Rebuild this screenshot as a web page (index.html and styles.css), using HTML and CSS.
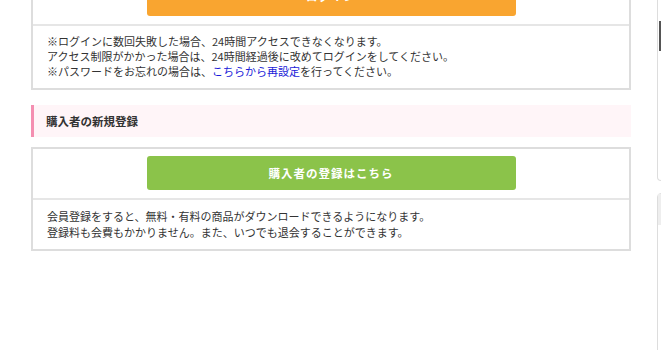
FILE: index.html
```html
<!DOCTYPE html>
<html lang="ja">
<head>
    <meta charset="UTF-8">
    <meta name="viewport" content="width=device-width, initial-scale=1.0">
    <title>ログイン</title>
    <link rel="stylesheet" href="styles.css">
</head>
<body>

<div class="page">
    <main class="main">
        <!-- ログイン -->
        <div class="box">
            <div class="box-action">
                <button class="btn btn-login">ログイン</button>
            </div>
            <div class="box-note box-note-tight">
                <p>※ログインに数回失敗した場合、24時間アクセスできなくなります。</p>
                <p>アクセス制限がかかった場合は、24時間経過後に改めてログインをしてください。</p>
                <p>※パスワードをお忘れの場合は、<a href="#">こちらから再設定</a>を行ってください。</p>
            </div>
        </div>

        <!-- 新規登録 -->
        <h2 class="section-title">購入者の新規登録</h2>
        <div class="box">
            <div class="box-action">
                <button class="btn btn-register">購入者の登録はこちら</button>
            </div>
            <div class="box-note">
                <p>会員登録をすると、無料・有料の商品がダウンロードできるようになります。</p>
                <p>登録料も会費もかかりません。また、いつでも退会することができます。</p>
            </div>
        </div>
    </main>

    <aside class="sidebar">
        <div class="widget widget-top">
            <div class="widget-bar"></div>
        </div>
        <div class="widget widget-bottom">
            <div class="widget-head"></div>
        </div>
    </aside>
</div>

</body>
</html>
```

FILE: styles.css
```css
:root {
    --borderColor: #dddddd;
    --textColor: #333333;
    --orange: #f9a530;
    --green: #8bc34a;
}

html, body {
    margin: 0;
    padding: 0;
    overflow: hidden;
}

body {
    font-family: "Noto Sans CJK JP", "Noto Sans", sans-serif;
    font-size: 11px;
    color: var(--textColor);
    background: #fff;
}

.page {
    display: flex;
    align-items: flex-start;
    margin-top: -27px; /* ページ途中から */
}

.main {
    width: 600px;
    margin-left: 31px;
    flex-shrink: 0;
}

/* Box */
.box {
    border: 2px solid var(--borderColor);
}

.box-action {
    display: flex;
    justify-content: center;
    padding: 7px 0 8px;
    border-bottom: 2px solid #e6e6e6;
}

.btn {
    width: 369px;
    height: 34px;
    border: none;
    border-radius: 3px;
    color: #fff;
    font-family: inherit;
    font-size: 11.5px;
    font-weight: bold;
    letter-spacing: 1px;
}

.btn-login {
    background: var(--orange);
    padding-bottom: 8px;
}

.btn-register {
    background: var(--green);
}

.box-note {
    padding: 8px 14px 9px;
    line-height: 16px;
}

.box-note-tight {
    line-height: 15px;
}

.box-note p {
    margin: 0;
}

.box-note a {
    color: #1a1ad8;
    text-decoration: none;
}

/* Section title */
.section-title {
    margin: 15px 0 10px;
    padding: 0 12px;
    height: 32px;
    line-height: 32px;
    font-size: 11.5px;
    font-weight: bold;
    background: #fff5f8;
    border-left: 3px solid #f48fb1;
}

/* Sidebar (rechts afgesneden) */
.sidebar {
    margin-left: 26px;
    width: 200px;
    flex-shrink: 0;
    display: flex;
    flex-direction: column;
    gap: 12px;
}

.widget {
    border: 1px solid var(--borderColor);
}

.widget-top {
    height: 208px;
    border-top: none;
    border-radius: 0 0 0 4px;
    padding-top: 48px;
    box-sizing: border-box;
}

.widget-bar {
    height: 30px;
    margin-left: 1px;
    background: #555;
}

.widget-bottom {
    height: 200px;
    border-radius: 4px 0 0 0;
}

.widget-head {
    height: 31px;
    background: #eeeeee;
}
```
